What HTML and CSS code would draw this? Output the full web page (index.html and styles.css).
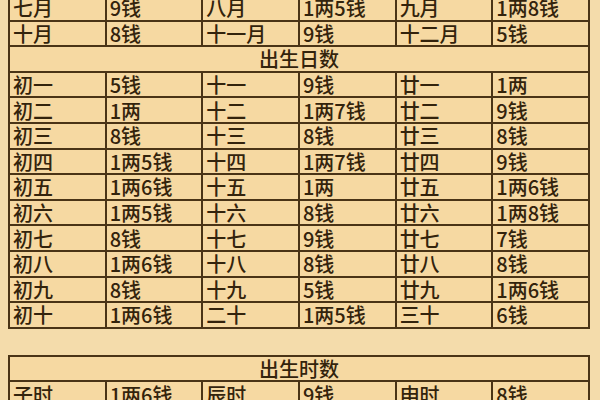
FILE: index.html
```html
<!DOCTYPE html>
<html lang="zh">
<head>
<meta charset="utf-8">
<title>称骨表</title>
<link rel="stylesheet" href="styles.css">
</head>
<body>
<div class="page">
  <table class="grid grid-top">
    <colgroup><col><col><col><col><col><col></colgroup>
    <tr><td>七月</td><td>9钱</td><td>八月</td><td>1两5钱</td><td>九月</td><td>1两8钱</td></tr>
    <tr><td>十月</td><td>8钱</td><td>十一月</td><td>9钱</td><td>十二月</td><td>5钱</td></tr>
    <tr><th colspan="6">出生日数</th></tr>
    <tr><td>初一</td><td>5钱</td><td>十一</td><td>9钱</td><td>廿一</td><td>1两</td></tr>
    <tr><td>初二</td><td>1两</td><td>十二</td><td>1两7钱</td><td>廿二</td><td>9钱</td></tr>
    <tr><td>初三</td><td>8钱</td><td>十三</td><td>8钱</td><td>廿三</td><td>8钱</td></tr>
    <tr><td>初四</td><td>1两5钱</td><td>十四</td><td>1两7钱</td><td>廿四</td><td>9钱</td></tr>
    <tr><td>初五</td><td>1两6钱</td><td>十五</td><td>1两</td><td>廿五</td><td>1两6钱</td></tr>
    <tr><td>初六</td><td>1两5钱</td><td>十六</td><td>8钱</td><td>廿六</td><td>1两8钱</td></tr>
    <tr><td>初七</td><td>8钱</td><td>十七</td><td>9钱</td><td>廿七</td><td>7钱</td></tr>
    <tr><td>初八</td><td>1两6钱</td><td>十八</td><td>8钱</td><td>廿八</td><td>8钱</td></tr>
    <tr><td>初九</td><td>8钱</td><td>十九</td><td>5钱</td><td>廿九</td><td>1两6钱</td></tr>
    <tr><td>初十</td><td>1两6钱</td><td>二十</td><td>1两5钱</td><td>三十</td><td>6钱</td></tr>
  </table>
  <table class="grid grid-bottom">
    <colgroup><col><col><col><col><col><col></colgroup>
    <tr><th colspan="6">出生时数</th></tr>
    <tr><td>子时</td><td>1两6钱</td><td>辰时</td><td>9钱</td><td>申时</td><td>8钱</td></tr>
  </table>
</div>
</body>
</html>
```
FILE: styles.css
```css
html, body {
  margin: 0;
  padding: 0;
  background: #f4dcab;
}
.page {
  padding: 0 10px 0 8px;
}
.grid {
  width: 582px;
  border-collapse: collapse;
  table-layout: fixed;
  background: #f6d9a2;
  font-family: "Noto Sans CJK SC", "Noto Sans", sans-serif;
  font-size: 20px;
  color: #33230c;
}
.grid-top {
  margin-top: -6px;
}
.grid-bottom {
  margin-top: 26px;
}
.grid td, .grid th {
  border: 2px solid #4a3416;
  height: 23.6px;
  padding: 0 3px;
  line-height: 23px;
  text-align: left;
  vertical-align: middle;
  white-space: nowrap;
  font-weight: 500;
}
.grid th {
  text-align: center;
}
```
